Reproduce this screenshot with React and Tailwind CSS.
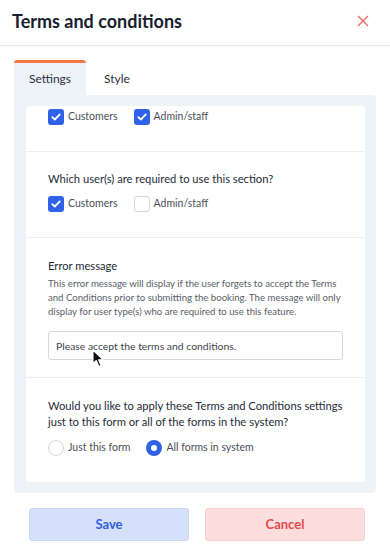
import { useState } from "react";

function Checkbox({ checked, label }) {
  return (
    <label className="flex items-center gap-[4px]">
      {checked ? (
        <span className="w-4 h-4 rounded-[3px] bg-[#2f62e8] flex items-center justify-center">
          <svg width="10" height="8" viewBox="0 0 10 8">
            <path d="M1.3 4.2 L3.8 6.5 L8.7 1.5" fill="none" stroke="white" strokeWidth="1.8" strokeLinecap="round" strokeLinejoin="round" />
          </svg>
        </span>
      ) : (
        <span className="w-4 h-4 rounded-[3px] bg-white border border-[#d3d6db]" />
      )}
      <span className="text-[10.5px] text-[#4a4f57]">{label}</span>
    </label>
  );
}

function Radio({ checked, label }) {
  return (
    <label className="flex items-center gap-[4px]">
      {checked ? (
        <span className="w-4 h-4 rounded-full bg-[#2f62e8] flex items-center justify-center">
          <span className="w-[6px] h-[6px] rounded-full bg-white" />
        </span>
      ) : (
        <span className="w-4 h-4 rounded-full bg-white border border-[#d8dadd]" />
      )}
      <span className="text-[10.5px] text-[#4a4f57]">{label}</span>
    </label>
  );
}

export default function App() {
  const [tab, setTab] = useState("settings");

  return (
    <div className="w-[390px] h-[551px] bg-white font-['Lato',sans-serif] relative overflow-hidden">
      <div className="h-[46px] px-3 flex items-center justify-between border-b border-[#e6e8eb]">
        <h1 className="text-[18px] font-bold text-[#17202e] -mt-[3px]">Terms and conditions</h1>
        <svg width="12" height="12" viewBox="0 0 12 12" className="mr-[9px] -mt-[4px]">
          <path d="M1 1 L11 11 M11 1 L1 11" stroke="#ef5a5a" strokeWidth="1.2" />
        </svg>
      </div>

      <div className="px-[14px] pt-[14px]">
        <div className="flex h-[35px]">
          <button
            onClick={() => setTab("settings")}
            className="w-[72px] h-[35px] bg-[#eef3f8] border-t-[3px] border-[#f5774d] rounded-t-[3px] text-[12px] text-[#2a3140]"
          >
            Settings
          </button>
          <button onClick={() => setTab("style")} className="w-[62px] h-[35px] text-[12px] text-[#2a3140] pt-[3px]">
            Style
          </button>
        </div>

        <div className="bg-[#eef3f8] rounded-b-[4px] rounded-tr-[4px] pt-[11px] pb-[11px] pl-[12px] pr-[11px]">
          <div className="bg-white rounded-[3px] h-[376px] overflow-hidden">
            <div className="px-[22px] pt-[3px] h-[46px] border-b border-[#eceef1]">
              <div className="flex gap-[16px]">
                <Checkbox checked label="Customers" />
                <Checkbox checked label="Admin/staff" />
              </div>
            </div>

            <div className="px-[22px] pt-[17px] pb-[25px] border-b border-[#eceef1]">
              <p className="text-[11.2px] leading-[20px] text-[#242b38]">Which user(s) are required to use this section?</p>
              <div className="flex gap-[16px] mt-[7px]">
                <Checkbox checked label="Customers" />
                <Checkbox label="Admin/staff" />
              </div>
            </div>

            <div className="px-[22px] pt-[18px] pb-[17px] border-b border-[#eceef1] relative">
              <p className="text-[11.2px] leading-[20px] text-[#242b38]">Error message</p>
              <p className="text-[9.6px] leading-[14px] text-[#595e67] mt-[1px]">
                This error message will display if the user forgets to accept the Terms and Conditions prior to submitting the booking. The message will only display for user type(s) who are required to use this feature.
              </p>
              <input
                className="mt-[12px] w-full h-[29px] border border-[#d5d8dc] rounded-[3px] px-[7px] text-[10.4px] text-[#3d424a] outline-none"
                defaultValue="Please accept the terms and conditions."
              />
              <svg width="13" height="19" viewBox="0 0 13 19" className="absolute left-[66px] top-[111px]">
                <path d="M1 1 L1 14.5 L4.3 11.5 L6.8 17.5 L9 16.6 L6.6 10.8 L11.2 10.8 Z" fill="#111" stroke="white" strokeWidth="1.1" strokeLinejoin="round" />
              </svg>
            </div>

            <div className="px-[22px] pt-[20px]">
              <p className="text-[11.2px] leading-[16px] text-[#242b38]">
                Would you like to apply these Terms and Conditions settings just to this form or all of the forms in the system?
              </p>
              <div className="flex gap-[16px] mt-[10px]">
                <Radio label="Just this form" />
                <Radio checked label="All forms in system" />
              </div>
            </div>
          </div>
        </div>
      </div>

      <div className="flex gap-[16px] px-[29px] mt-[15px] pr-[25px]">
        <button className="w-[160px] h-[33px] rounded-[3px] bg-[#d6e0fb] border border-[#cdd8f5] text-[13px] font-bold text-[#2f5fe0]">
          Save
        </button>
        <button className="w-[160px] h-[33px] rounded-[3px] bg-[#fcdedd] border border-[#f7d3d2] text-[13px] font-bold text-[#e5484d]">
          Cancel
        </button>
      </div>
    </div>
  );
}
